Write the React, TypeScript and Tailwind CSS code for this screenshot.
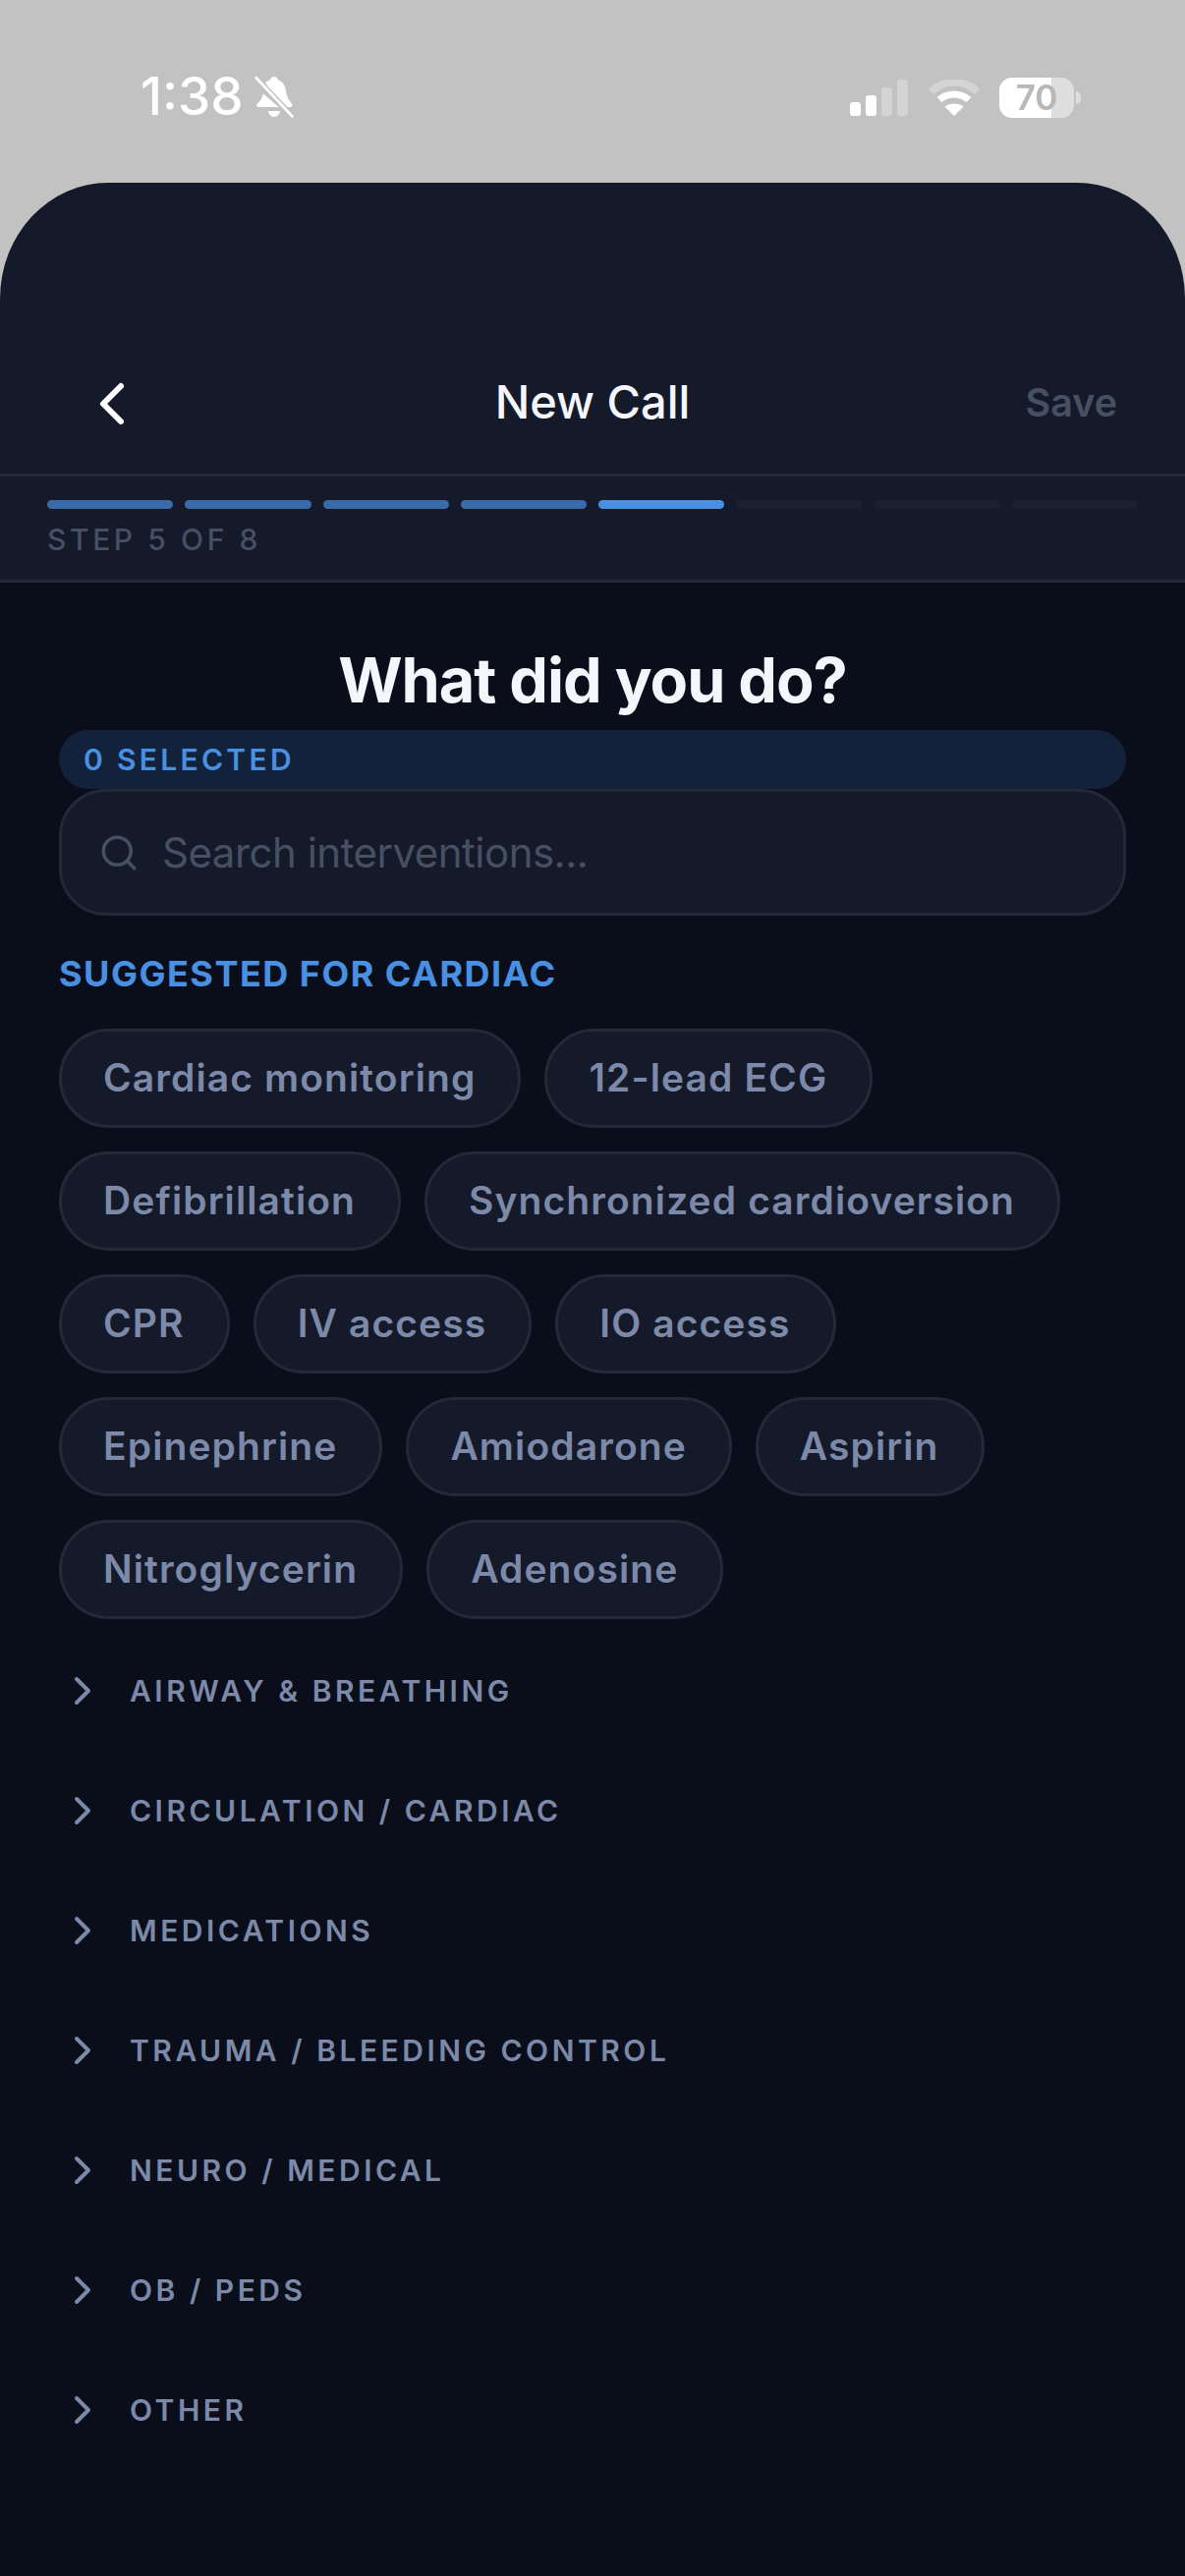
import { ChevronLeft, ChevronRight, Search } from "lucide-react";

const steps = [1, 2, 3, 4, 5, 6, 7, 8];

const suggested = [
  ["Cardiac monitoring", "12-lead ECG"],
  ["Defibrillation", "Synchronized cardioversion"],
  ["CPR", "IV access", "IO access"],
  ["Epinephrine", "Amiodarone", "Aspirin"],
  ["Nitroglycerin", "Adenosine"],
];

const categories = [
  "AIRWAY & BREATHING",
  "CIRCULATION / CARDIAC",
  "MEDICATIONS",
  "TRAUMA / BLEEDING CONTROL",
  "NEURO / MEDICAL",
  "OB / PEDS",
  "OTHER",
];

function StatusBar() {
  return (
    <div className="flex h-[186px] items-start justify-between bg-[#c2c2c2] pt-[77px] pr-[106px] pl-[143px] text-white">
      <div className="flex items-center gap-[11px]">
        <span className="text-[53px] leading-[43px] font-medium">1:38</span>
        <svg width="40" height="43" viewBox="0 0 40 43" fill="none">
          <path
            d="M20 1c2 0 3.500 1.500 4 3.500 5 1.500 7.500 6 8 11 .5 5 2.500 9 6 13 1 1.500 .5 3.500-2 3.500H5c-3 0-3.500-2-2-3.500 3-3 5-6 6-10L26 33 11 7c2-1.500 4-2.500 5-2.800C16.500 2.500 18 1 20 1z"
            fill="white"
          />
          <path d="M14 36h12c-.5 3.500-3 6-6 6s-5.500-2.500-6-6z" fill="white" />
          <path d="M2 3l36 38" stroke="#c2c2c2" strokeWidth="6" />
          <path d="M1.500 2l37 39.500" stroke="white" strokeWidth="2.600" strokeLinecap="round" />
        </svg>
      </div>
      <div className="flex items-center pt-[2px]">
        <div className="flex h-[37px] items-end gap-[5px]">
          <div className="h-[14px] w-[11px] rounded-[3px] bg-white" />
          <div className="h-[21px] w-[11px] rounded-[3px] bg-white" />
          <div className="h-[29px] w-[11px] rounded-[3px] bg-[#d4d4d4]" />
          <div className="h-[37px] w-[11px] rounded-[3px] bg-[#d4d4d4]" />
        </div>
        <svg className="ml-[21px]" width="52" height="37" viewBox="0 0 52 37" fill="none">
          <path d="M2.500 12.500C15 -0.500 37 -0.500 49.500 12.500" stroke="#d4d4d4" strokeWidth="7.500" />
          <path d="M11 20.500C19 13 33 13 41 20.500" stroke="white" strokeWidth="7" />
          <path d="M26 37L16.500 27.500C21.500 23.500 30.500 23.500 35.500 27.500z" fill="white" />
        </svg>
        <div className="ml-[20px] flex items-center">
          <div className="flex h-[41px] w-[76px] items-center justify-center rounded-[13px] bg-[linear-gradient(90deg,#ffffff_70%,#dedede_70%)] text-[35px] leading-none font-semibold text-[#b8b8b8]">
            70
          </div>
          <div className="ml-[2px] h-[13px] w-[5px] rounded-r-full bg-[#dedede]" />
        </div>
      </div>
    </div>
  );
}

function Header() {
  return (
    <header className="flex h-[299px] items-end rounded-t-[110px_118px] border-b-[3px] border-[#232938] bg-[#141a29] pr-[69px] pb-[38px] pl-[78px]">
      <div className="grid h-[72px] w-full grid-cols-[1fr_auto_1fr] items-center">
        <ChevronLeft className="mt-[3px] size-[72px] text-white" strokeWidth={2} />
        <span className="pr-[9px] text-[47px] font-medium text-[#f4f6fc]">New Call</span>
        <span className="mt-[3px] text-right text-[39.500px] font-semibold text-[#475063]">Save</span>
      </div>
    </header>
  );
}

function Progress() {
  return (
    <div className="h-[108px] border-b-[3px] border-[#232938] bg-[#141a29] px-[48px] pt-[24px]">
      <div className="flex gap-[12px]">
        {steps.map((s) => (
          <div
            key={s}
            className={
              s < 5
                ? "h-[9px] flex-1 rounded-full bg-[#3a6aa8]"
                : s === 5
                  ? "h-[9px] flex-1 rounded-full bg-[#4a90e2]"
                  : "h-[9px] flex-1 rounded-full bg-[#1a202e]"
            }
          />
        ))}
      </div>
      <div className="mt-[13px] text-[30px] leading-[36px] font-medium tracking-[3.600px] text-[#475063]">STEP 5 OF 8</div>
    </div>
  );
}

export default function App() {
  return (
    <div className="flex min-h-[2622px] flex-col bg-[#c2c2c2] font-['Inter',sans-serif]">
      <StatusBar />
      <Header />
      <Progress />
      <main className="flex-1 bg-[#0a0e1a] px-[60px]">
        <h1 className="pt-[62px] text-center text-[63px] leading-[74px] font-bold tracking-[-1px] text-[#f4f6fc]">
          What did you do?
        </h1>
        <div className="mt-[14px] flex h-[60px] items-center rounded-[30px] bg-[#13223b] pl-[25px] text-[30px] font-semibold tracking-[3.300px] text-[#4a90e2]">
          0 SELECTED
        </div>
        <div className="flex h-[129px] items-center gap-[23px] rounded-[48px] border-[3px] border-[#232938] bg-[#141a29] pl-[37px]">
          <Search className="size-[42px] text-[#475063]" strokeWidth={2} />
          <span className="text-[42px] tracking-[-0.500px] text-[#475063]">Search interventions...</span>
        </div>
        <div className="mt-[37px] text-[36px] leading-[44px] font-bold tracking-[1.500px] text-[#4a90e2]">
          SUGGESTED FOR CARDIAC
        </div>
        <div className="mt-[34px] flex flex-col gap-[24px]">
          {suggested.map((row) => (
            <div key={row[0]} className="flex gap-[24px]">
              {row.map((chip) => (
                <div
                  key={chip}
                  className="flex h-[101px] items-center rounded-full border-[3px] border-[#232938] bg-[#141a29] pr-[43px] pl-[42px] text-[39px] font-semibold tracking-[1.100px] text-[#7c89a8]"
                >
                  {chip}
                </div>
              ))}
            </div>
          ))}
        </div>
        <div className="mt-[12px]">
          {categories.map((c) => (
            <div key={c} className="flex h-[122px] items-center">
              <ChevronRight className="size-[48px] text-[#7c89a8]" strokeWidth={2} />
              <span className="ml-[24px] text-[30px] font-semibold tracking-[3.500px] text-[#7c89a8]">{c}</span>
            </div>
          ))}
        </div>
      </main>
    </div>
  );
}
